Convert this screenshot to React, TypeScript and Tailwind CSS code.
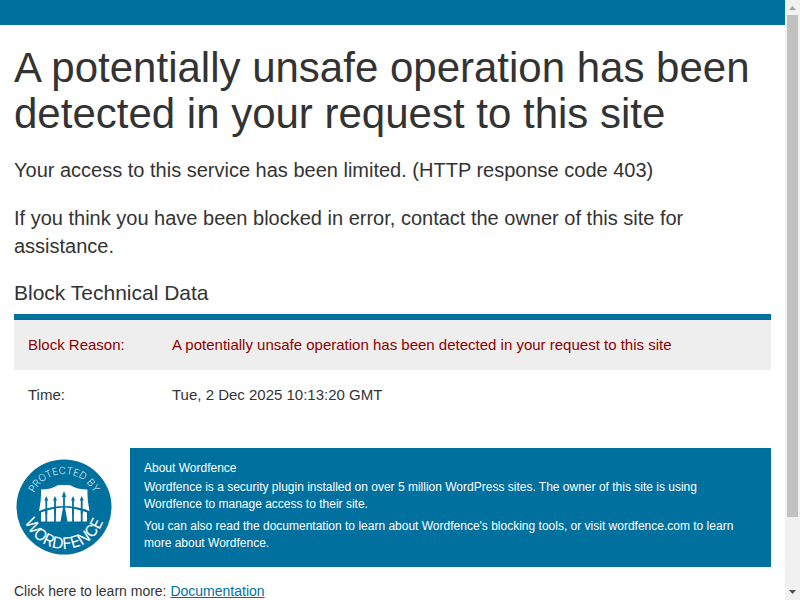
import React from "react";

const details = [
  {
    label: "Block Reason:",
    value:
      "A potentially unsafe operation has been detected in your request to this site",
    row: "bg-[#eeeeee] text-[#8c0000]",
  },
  { label: "Time:", value: "Tue, 2 Dec 2025 10:13:20 GMT", row: "" },
];

const WordfenceBadge = () => {
  return (
    <svg
      viewBox="0 0 96 96"
      className="w-24 h-24 shrink-0"
      role="img"
      aria-label="Protected by Wordfence"
    >
      <defs>
        <path id="badge-top" d="M15 48a33 33 0 0 1 66 0" />
        <path id="badge-bottom" d="M6 48a42 42 0 0 0 84 0" />
      </defs>
      <circle cx="48" cy="48" r="47.5" fill="#00709e" />
      <text
        fill="#d3e7ef"
        fontFamily="Inter, sans-serif"
        fontSize="10"
        fontWeight="300"
        textAnchor="middle"
      >
        <textPath href="#badge-top" startOffset="50%">
          PROTECTED BY
        </textPath>
      </text>
      <text
        fill="#fff"
        fontFamily="Inter, sans-serif"
        fontSize="16"
        textAnchor="middle"
      >
        <textPath href="#badge-bottom" startOffset="50%">
          WORDFENCE
        </textPath>
      </text>
      {/* shield */}
      <path
        d="M25 30.5Q35 30.500 42 26H54Q61 30.500 71.500 30.500Q71 41 73.500 52Q48 42 23 52Q25.500 41 25 30.500Z"
        fill="#fff"
      />
      {/* planks under the rail */}
      <path
        d="M25 53.500L29.400 51.900V62.500H25ZM31.200 51.400L38.100 49.700V62.500H31.200ZM39.900 49.300L47 48.600L44.500 62.500H39.900ZM49 48.600L56.100 49.300V62.500H51.500ZM57.900 49.700L64.800 51.400V62.500H57.900ZM66.600 51.900L71 53.500V62.500H66.600Z"
        fill="#fff"
      />
      {/* pickets */}
      <path
        d="M30.300 41V55M39 40V55M48 35V55M57 40V55M65.700 41V55"
        stroke="#00709e"
        strokeWidth="1.800"
      />
      <path
        d="M30.300 37l2 4.500h-4ZM39 37l2 4.500h-4ZM48 32l2.200 6h-4.400ZM57 37l2 4.500h-4ZM65.700 37l2 4.500h-4Z"
        fill="#00709e"
      />
    </svg>
  );
};

const ScrollBar = () => {
  return (
    <div className="w-[15px] shrink-0 flex flex-col bg-[#f1f1f1]" aria-hidden="true">
      <svg viewBox="0 0 15 15" className="w-[15px] h-[15px] shrink-0">
        <path d="M4 10L7.500 6L11 10Z" fill="#a3a3a3" />
      </svg>
      <div className="flex-1 px-0.5">
        <div className="h-[88%] bg-[#c1c1c1]" />
      </div>
      <svg viewBox="0 0 15 15" className="w-[15px] h-[15px] shrink-0">
        <path d="M4 5L11 5L7.500 9Z" fill="#505050" />
      </svg>
    </div>
  );
};

const App = () => {
  return (
    <div className="flex h-screen overflow-hidden bg-white text-[#333333] font-['Liberation_Sans',Arial,sans-serif]">
      <div className="flex-1 min-w-0">
        <div className="h-[25px] bg-[#00709e]" />
        <main className="px-[14px] pt-5">
          <h1 className="text-[42px] leading-[46px]">
            A potentially unsafe operation has been detected in your request to
            this site
          </h1>
          <p className="mt-[19px] text-xl leading-7">
            Your access to this service has been limited. (HTTP response code
            403)
          </p>
          <p className="mt-5 text-xl leading-7">
            If you think you have been blocked in error, contact the owner of
            this site for assistance.
          </p>

          <h2 className="mt-5 pb-2 text-[21px] leading-[26px]">
            Block Technical Data
          </h2>
          <table className="w-full border-t-6 border-[#00709e] text-[15px] leading-[22px] text-left">
            <tbody>
              {details.map((item) => {
                return (
                  <tr key={item.label} className={item.row}>
                    <th className="w-[144px] p-[14px] font-normal">
                      {item.label}
                    </th>
                    <td className="p-[14px]">{item.value}</td>
                  </tr>
                );
              })}
            </tbody>
          </table>

          <div className="mt-7 flex items-center gap-[18px]">
            <div className="pl-0.5 pb-0.5 shrink-0">
              <WordfenceBadge />
            </div>
            <div className="flex-1 bg-[#00709e] text-white text-xs leading-[17px] px-[14px] pt-3 pb-[15px]">
              <h3>About Wordfence</h3>
              <p className="mt-0.5">
                Wordfence is a security plugin installed on over 5 million
                WordPress sites. The owner of this site is using Wordfence to
                manage access to their site.
              </p>
              <p className="mt-[5px]">
                You can also read the documentation to learn about Wordfence's
                blocking tools, or visit wordfence.com to learn more about
                Wordfence.
              </p>
            </div>
          </div>

          <p className="mt-[14px] text-sm leading-5">
            Click here to learn more:{" "}
            <a href="#documentation" className="text-[#00709e] underline">
              Documentation
            </a>
          </p>
        </main>
      </div>
      <ScrollBar />
    </div>
  );
};

export default App;
